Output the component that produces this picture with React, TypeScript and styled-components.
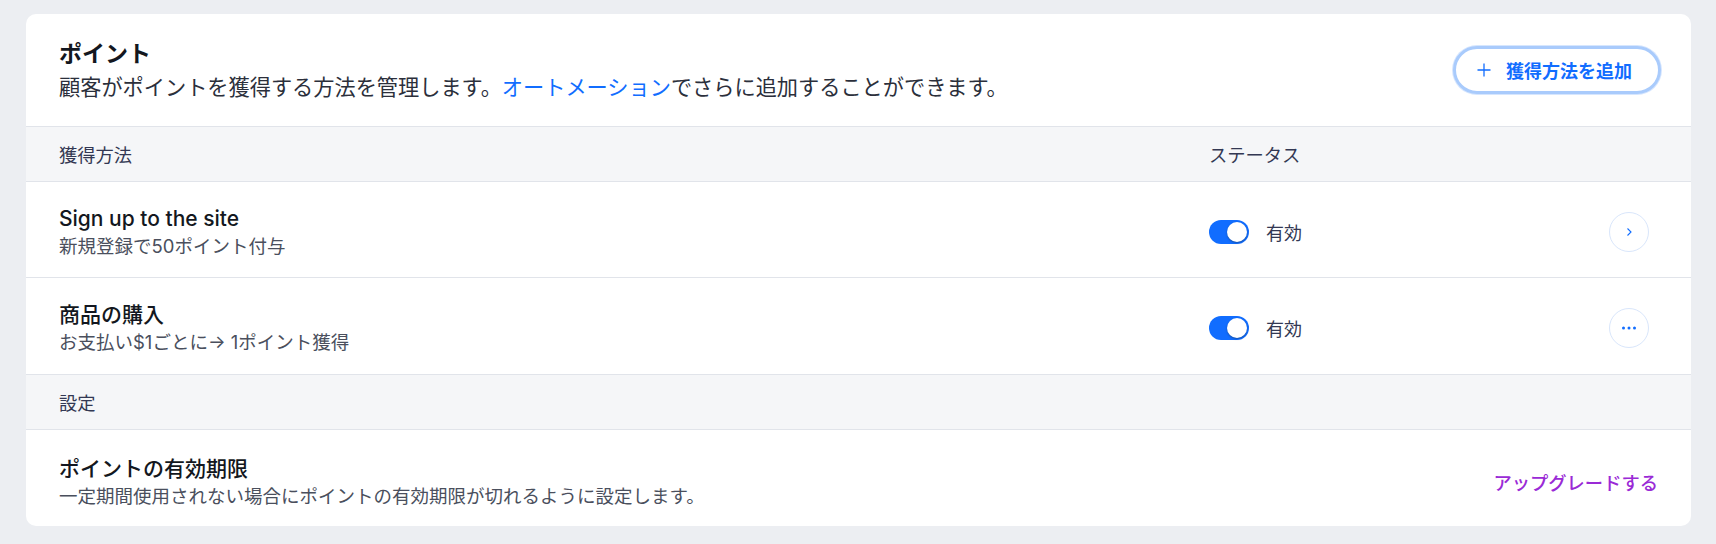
import React from 'react';
import styled, { createGlobalStyle } from 'styled-components';

const GlobalStyle = createGlobalStyle`
  body {
    margin: 0;
    background: #eceef2;
    font-family: 'Inter', 'Noto Sans CJK JP', sans-serif;
    color: #131720;
    -webkit-font-smoothing: antialiased;
  }
`;

/**
 * Page wrapper.
 */
const Page = styled.div`
  padding: 14px 25px 18px 26px;
`;

/**
 * White card holding the whole table.
 */
const Card = styled.div`
  background: #ffffff;
  border-radius: 10px;
  overflow: hidden;
`;

const CardHeader = styled.div`
  display: flex;
  align-items: center;
  justify-content: space-between;
  height: 113px;
  box-sizing: border-box;
  padding: 0 30px 0 33px;
  border-bottom: 1px solid #e1e4ea;
`;

const HeaderText = styled.div`
  display: flex;
  flex-direction: column;
  gap: 4px;
`;

const CardTitle = styled.div`
  font-size: 23px;
  font-weight: 700;
  line-height: 30px;
  color: #131720;
`;

const CardSubtitle = styled.div`
  font-size: 21.2px;
  line-height: 29px;
  color: #2b2f3b;
`;

const Link = styled.span`
  color: #116dff;
`;

const AddButton = styled.button`
  display: flex;
  align-items: center;
  gap: 15px;
  height: 48px;
  padding: 0 26px 0 21px;
  border-radius: 24px;
  border: 3px solid #a9cbfc;
  box-shadow: 0 0 0 1px #d6e6fe;
  background: #ffffff;
  color: #116dff;
  font-family: 'Inter', 'Noto Sans CJK JP', sans-serif;
  font-size: 18px;
  font-weight: 700;
  cursor: pointer;
`;

/**
 * Gray section heading row (column titles, settings).
 */
const SectionRow = styled.div`
  display: grid;
  grid-template-columns: 1fr 400px 40px;
  align-items: center;
  height: 55px;
  box-sizing: border-box;
  padding: 0 42px 0 33px;
  background: #f5f6f8;
  border-bottom: 1px solid #e1e4ea;
  font-size: 18.3px;
  color: #333853;
`;

interface RowProps {
  last?: boolean;
}

const Row = styled.div<RowProps>`
  display: grid;
  grid-template-columns: 1fr 400px 40px;
  align-items: center;
  height: ${props => (props.last ? '96px' : '97px')};
  box-sizing: border-box;
  padding: 4px 42px 0 33px;
  border-bottom: 1px solid #e1e4ea;
`;

const SettingRow = styled.div`
  display: flex;
  align-items: center;
  justify-content: space-between;
  height: 96px;
  box-sizing: border-box;
  padding: 8px 33px 0 33px;
`;

const Info = styled.div`
  display: flex;
  flex-direction: column;
  gap: 1px;
`;

const RowTitle = styled.div`
  font-size: 21px;
  font-weight: 500;
  line-height: 27px;
  color: #131720;
`;

const RowSubtitle = styled.div`
  font-size: 18.5px;
  line-height: 26px;
  color: #4a4f5d;
`;

const Status = styled.div`
  display: flex;
  align-items: center;
  gap: 17px;
  font-size: 18px;
  color: #333853;
`;

interface ToggleProps {
  on: boolean;
}

const Toggle = styled.div<ToggleProps>`
  position: relative;
  width: 40px;
  height: 24px;
  border-radius: 12px;
  background: ${props => (props.on ? '#116dff' : '#c7cbd4')};

  &::after {
    content: '';
    position: absolute;
    top: 2px;
    left: ${props => (props.on ? '18px' : '2px')};
    width: 20px;
    height: 20px;
    border-radius: 50%;
    background: #ffffff;
    box-shadow: 0 1px 2px rgba(22, 45, 61, 0.45);
  }
`;

const IconButton = styled.button`
  display: flex;
  align-items: center;
  justify-content: center;
  width: 40px;
  height: 40px;
  padding: 0;
  border-radius: 50%;
  border: 1px solid #d9e6fb;
  background: #ffffff;
  color: #116dff;
  cursor: pointer;
`;

const Upgrade = styled.span`
  font-size: 18.3px;
  font-weight: 500;
  color: #9a2ad6;
`;

const Plus = () => (
  <svg width="14" height="14" viewBox="0 0 14 14">
    <path d="M7 0.5v13M0.5 7h13" stroke="currentColor" strokeWidth="1.3" fill="none" />
  </svg>
);

const Chevron = () => (
  <svg width="8" height="12" viewBox="0 0 8 12">
    <path d="M2.5 2.5L6 6l-3.5 3.5" stroke="currentColor" strokeWidth="1.1" fill="none" />
  </svg>
);

const Dots = () => (
  <svg width="16" height="4" viewBox="0 0 16 4">
    <circle cx="2.5" cy="2" r="1.5" fill="currentColor" />
    <circle cx="8" cy="2" r="1.5" fill="currentColor" />
    <circle cx="13.5" cy="2" r="1.5" fill="currentColor" />
  </svg>
);

interface Method {
  title: string;
  subtitle: string;
  action: 'open' | 'more';
}

const methods: Method[] = [
  { title: 'Sign up to the site', subtitle: '新規登録で50ポイント付与', action: 'open' },
  { title: '商品の購入', subtitle: 'お支払い$1ごとに→ 1ポイント獲得', action: 'more' },
];

const App: React.FC = () => {
  return (
    <Page>
      <GlobalStyle />
      <Card>
        <CardHeader>
          <HeaderText>
            <CardTitle>ポイント</CardTitle>
            <CardSubtitle>
              顧客がポイントを獲得する方法を管理します。<Link>オートメーション</Link>でさらに追加することができます。
            </CardSubtitle>
          </HeaderText>
          <AddButton>
            <Plus />
            獲得方法を追加
          </AddButton>
        </CardHeader>

        <SectionRow>
          <span>獲得方法</span>
          <span>ステータス</span>
          <span />
        </SectionRow>

        {methods.map((m, i) => (
          <Row key={m.title} last={i === 0}>
            <Info>
              <RowTitle>{m.title}</RowTitle>
              <RowSubtitle>{m.subtitle}</RowSubtitle>
            </Info>
            <Status>
              <Toggle on />
              有効
            </Status>
            <IconButton>{m.action === 'open' ? <Chevron /> : <Dots />}</IconButton>
          </Row>
        ))}

        <SectionRow>
          <span>設定</span>
        </SectionRow>

        <SettingRow>
          <Info>
            <RowTitle>ポイントの有効期限</RowTitle>
            <RowSubtitle>一定期間使用されない場合にポイントの有効期限が切れるように設定します。</RowSubtitle>
          </Info>
          <Upgrade>アップグレードする</Upgrade>
        </SettingRow>
      </Card>
    </Page>
  );
};

export default App;
